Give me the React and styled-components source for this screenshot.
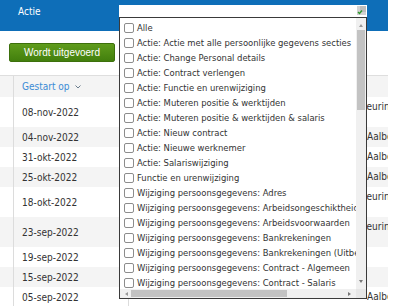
import React from 'react'
import styled, { createGlobalStyle } from 'styled-components'

const Global = createGlobalStyle`
  body {
    margin: 0;
    background: #fff;
    font-family: "DejaVu Sans Condensed", "Liberation Sans", sans-serif;
    font-size: 10px;
    color: #333;
  }
`

const Page = styled.div`
  position: relative;
  width: 388px;
  height: 306px;
  overflow: hidden;
`

const TopBar = styled.div`
  height: 31px;
  background: #0e6eb8;
  padding: 6px 0 0 18px;
  box-sizing: border-box;
  color: #fff;
  line-height: 12px;
`

const Toolbar = styled.div`
  padding: 12px 0 13px 9px;
`

const RunButton = styled.button`
  width: 106px;
  height: 19px;
  padding: 0;
  border: 1px solid #3d700c;
  border-radius: 2px;
  background: linear-gradient(#5f9c1c, #427f0d);
  color: #fff;
  font-family: "Liberation Sans", sans-serif;
  font-size: 10px;
  display: block;
`

const Row = styled.div`
  display: grid;
  grid-template-columns: 14px 115px 1fr 21px;
  height: ${p => p.$h}px;
  background: ${p => p.$shade ? '#f4f4f4' : '#fff'};
  border-top: ${p => p.$head ? '1px solid #dedede' : 'none'};
  box-sizing: border-box;
`

const Lead = styled.div`
  border-right: 1px solid #dcdcdc;
`

const DateCell = styled.div`
  display: flex;
  align-items: center;
  padding-left: 8px;
  border-right: 1px solid #dcdcdc;
  color: ${p => p.$head ? '#3b8bd4' : '#333'};
  gap: 5px;
`

const Side = styled.div`
  white-space: nowrap;
  overflow: hidden;
  align-self: ${p => p.$top ? 'start' : 'center'};
  padding-top: ${p => p.$top ? '4px' : '0'};
  text-indent: ${p => p.$shift || 0}px;
  line-height: 12px;
`

const Dropdown = styled.div`
  position: absolute;
  left: 119px;
  top: 5px;
  width: 248px;
  height: 294px;
  display: flex;
  flex-direction: column;
`

const Search = styled.div`
  height: 11px;
  background: #fff;
  display: flex;
  justify-content: flex-end;
  align-items: flex-start;
  padding: 1px 1px 0 0;
`

const ListBox = styled.div`
  flex: 1;
  border: 1px solid #3a3a3a;
  background: #fff;
  display: grid;
  grid-template-columns: 1fr 10px;
  grid-template-rows: 1fr 9px;
  min-height: 0;
`

const Options = styled.div`
  overflow: hidden;
  padding-top: 2px;
`

const Option = styled.label`
  display: flex;
  align-items: center;
  gap: 3px;
  height: 15px;
  padding-left: 4px;
  white-space: nowrap;
  font-size: 9.4px;
  color: #333;
`

const Box = styled.span`
  flex: none;
  width: 8px;
  height: 8px;
  border: 1px solid #8c8c8c;
  border-radius: 2px;
  background: #fff;
`

const VScroll = styled.div`
  background: #f0f0f0;
  display: flex;
  flex-direction: column;
  align-items: center;
`

const HScroll = styled.div`
  background: #f0f0f0;
  display: flex;
  align-items: center;
  padding: 0 3px;
  gap: 3px;
`

const Corner = styled.div`
  background: #e6e6e6;
`

const Arrow = styled.span`
  flex: none;
  width: 0;
  height: 0;
  border: 2px solid transparent;
  ${p => p.$dir === 'up' && 'border-bottom: 3px solid #999; margin: 4px 0 3px;'}
  ${p => p.$dir === 'down' && 'border-top: 3px solid #777; margin: 3px 0 4px;'}
  ${p => p.$dir === 'left' && 'border-right: 3px solid #999;'}
  ${p => p.$dir === 'right' && 'border-left: 3px solid #777;'}
`

const VThumb = styled.div`
  width: 8px;
  height: 80px;
  background: #c3c3c3;
`

const VTrack = styled.div`
  flex: 1;
`

const HThumb = styled.div`
  width: 156px;
  height: 7px;
  background: #c3c3c3;
`

const HTrack = styled.div`
  flex: 1;
`

const options = [
  'Alle',
  'Actie: Actie met alle persoonlijke gegevens secties',
  'Actie: Change Personal details',
  'Actie: Contract verlengen',
  'Actie: Functie en urenwijziging',
  'Actie: Muteren positie & werktijden',
  'Actie: Muteren positie & werktijden & salaris',
  'Actie: Nieuw contract',
  'Actie: Nieuwe werknemer',
  'Actie: Salariswijziging',
  'Functie en urenwijziging',
  'Wijziging persoonsgegevens: Adres',
  'Wijziging persoonsgegevens: Arbeidsongeschiktheid',
  'Wijziging persoonsgegevens: Arbeidsvoorwaarden',
  'Wijziging persoonsgegevens: Bankrekeningen',
  'Wijziging persoonsgegevens: Bankrekeningen (Uitbetaling)',
  'Wijziging persoonsgegevens: Contract - Algemeen',
  'Wijziging persoonsgegevens: Contract - Salaris',
]

const rows = [
  { date: '08-nov-2022', h: 30, side: 'Goedkeuring', shift: -29 },
  { date: '04-nov-2022', h: 20, side: 'Aalbers' },
  { date: '31-okt-2022', h: 20, side: 'Aalbers' },
  { date: '25-okt-2022', h: 20, side: 'Aalbers' },
  { date: '18-okt-2022', h: 30, side: 'Goedkeuring', shift: -29 },
  { date: '23-sep-2022', h: 30, side: 'Goedkeuring', shift: -29 },
  { date: '19-sep-2022', h: 20, side: '' },
  { date: '15-sep-2022', h: 20, side: '' },
  { date: '05-sep-2022', h: 20, side: 'Aalbers' },
]

const Grip = () => (
  <svg width="9" height="9" viewBox="0 0 9 9">
    <rect x="0" y="0" width="9" height="9" fill="#d2d2d2" />
    <rect x="3" y="0" width="6" height="6" fill="#bdbdbd" />
    <path d="M1 6 L2.5 7.5 L5 4.5" stroke="#2c9a2c" strokeWidth="1.3" fill="none" />
  </svg>
)

const Chevron = () => (
  <svg width="6" height="4" viewBox="0 0 6 4">
    <path d="M0.5 0.5 L3 3 L5.5 0.5" stroke="#6a7c8c" strokeWidth="1" fill="none" />
  </svg>
)

export default function App() {
  return (
    <Page>
      <Global />
      <TopBar>Actie</TopBar>
      <Toolbar>
        <RunButton>Wordt uitgevoerd</RunButton>
      </Toolbar>

      <Row $h={22} $head $shade>
        <Lead />
        <DateCell $head>Gestart op <Chevron /></DateCell>
        <div />
        <div />
      </Row>
      {rows.map((r, i) => (
        <Row key={r.date} $h={r.h} $shade={i % 2 === 1}>
          <Lead />
          <DateCell>{r.date}</DateCell>
          <div />
          <Side $top={r.h > 20} $shift={r.shift}>{r.side}</Side>
        </Row>
      ))}

      <Dropdown>
        <Search>
          <Grip />
        </Search>
        <ListBox>
          <Options>
            {options.map(o => (
              <Option key={o}>
                <Box />
                {o}
              </Option>
            ))}
          </Options>
          <VScroll>
            <Arrow $dir="up" />
            <VThumb />
            <VTrack />
            <Arrow $dir="down" />
          </VScroll>
          <HScroll>
            <Arrow $dir="left" />
            <HThumb />
            <HTrack />
            <Arrow $dir="right" />
          </HScroll>
          <Corner />
        </ListBox>
      </Dropdown>
    </Page>
  )
}
